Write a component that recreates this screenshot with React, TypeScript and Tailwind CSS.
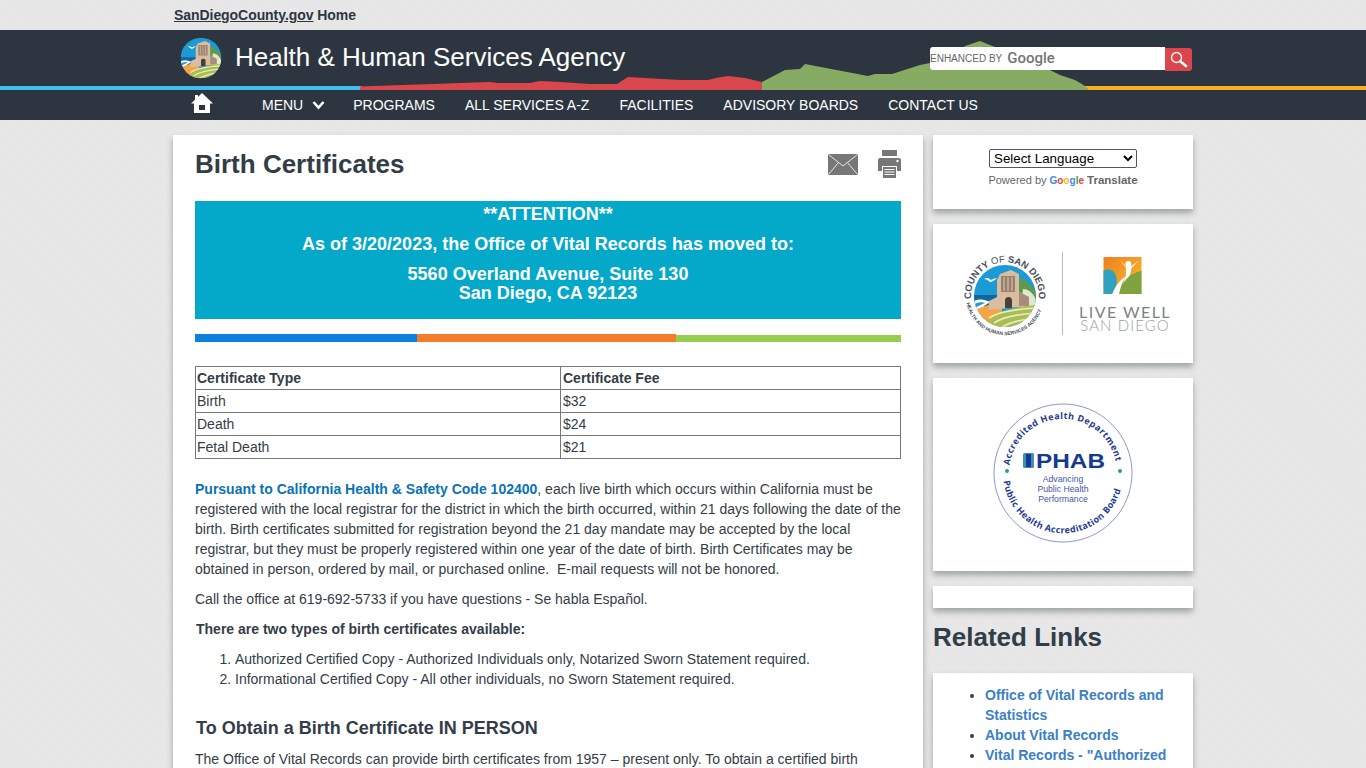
import React from "react";

function Scene({ id }: { id: string }) {
  return (
    <g>
      <defs>
        <clipPath id={id}>
          <circle cx="0" cy="0" r="31" />
        </clipPath>
      </defs>
      <g clipPath={`url(#${id})`}>
        <rect x="-31" y="-31" width="62" height="62" fill="#1c9ad6" />
        <path d="M-31 -1H-6V12H-31Z" fill="#12659f" />
        <path d="M-31 5C-24 2 -20 4 -15 6C-18 9 -23 9 -21 13L-31 16Z" fill="#ffffff" />
        <path d="M-31 8C-26 6 -22 6 -20 7C-24 9 -27 10 -31 12Z" fill="#1c9ad6" />
        <path d="M-31 14L-17 9L-3 10L-3 31H-31Z" fill="#f2a544" />
        <path d="M12 -18C20 -18 28 -10 31 -2V12H10Z" fill="#5f9a4a" />
        <path d="M18 -7C24 -7 28 -3 31 4V12H16Z" fill="#e3e8cc" />
        <path d="M-16 14V5L-8 1V-16L-5 -22L6 -26L14 -22V-4L24 1V10Z" fill="#d8bda2" />
        <path d="M-4 -20H10V-4H-4Z" fill="#96806f" />
        <path d="M-1 -19V-5M3 -19V-5M7 -19V-5" stroke="#d8bda2" strokeWidth="1.2" />
        <path d="M0 12V4C0 0 7 0 7 4V12Z" fill="#4e3e35" />
        <path d="M14 -4L24 1V10H14Z" fill="#a88d7b" />
        <path d="M-18 31C-18 18 6 11 31 9V31Z" fill="#a9bd54" />
        <path d="M-16 22C-6 15 12 13 31 12M-11 27C0 20 14 18 31 17M-3 31C8 25 20 23 31 23" stroke="#e9edb9" strokeWidth="1.7" fill="none" />
        <path d="M-21 -17C-18 -19 -16 -18 -14 -16C-12 -17 -10 -18 -8 -18C-10 -16 -13 -14 -15 -14C-17 -16 -19 -17 -21 -17Z" fill="#ffffff" />
      </g>
    </g>
  );
}

function Mountains() {
  return (
    <svg className="absolute left-0 top-0" width="1366" height="60" viewBox="0 30 1366 60">
      <path d="M360 90V86.5L490 82L498 83L530 83L540 81L560 82L590 84L617 84L628 77L680 80L708 80L716 78L728 76L745 78L762 82L783 90Z" fill="#d9474c" />
      <path d="M762 90V82L785 70L800 69L805 64L868 76L875 74L892 74L920 65L945 60L965 46L980 41L1000 49L1025 60L1050 70L1060 75L1075 80L1085 86L1089 90Z" fill="#87ab62" />
    </svg>
  );
}

function CountyLogo() {
  return (
    <svg width="90" height="90" viewBox="-45 -45 90 90" className="shrink-0">
      <Scene id="countyClip" />
      <defs>
        <path id="countyTop" d="M-33.9 3A34 34 0 1 1 33.9 3" />
        <path id="countyBottom" d="M-38.7 5A39 39 0 0 0 38.7 5" />
      </defs>
      <text fontSize="9.5" fontWeight="700" fill="#4a4f5a" style={{ fontFamily: '"Liberation Sans", sans-serif' }}>
        <textPath href="#countyTop" startOffset="0">
          COUNTY <tspan fontWeight="400">OF</tspan> SAN DIEGO
        </textPath>
      </text>
      <text fontSize="5" fontWeight="700" fill="#4a4f5a" style={{ fontFamily: '"Liberation Sans", sans-serif' }}>
        <textPath href="#countyBottom" startOffset="2">
          HEALTH AND HUMAN SERVICES AGENCY
        </textPath>
      </text>
    </svg>
  );
}

function LiveWellIcon() {
  return (
    <svg width="39" height="37" viewBox="0 0 39 38" className="block">
      <defs>
        <linearGradient id="lwSky" x1="0" y1="0" x2="1" y2="1">
          <stop offset="0" stopColor="#ee7d22" />
          <stop offset="1" stopColor="#f9c22c" />
        </linearGradient>
      </defs>
      <rect width="39" height="38" fill="url(#lwSky)" />
      <path d="M0 14C6 11 12 14 13 20C15 26 13 30 9 38H0Z" fill="#2fa3bd" />
      <path d="M9 38C14 27 24 18 39 14V38Z" fill="#7fa33f" />
      <path d="M9 38C13 28 18 23 23 20C19 26 17 32 16 38Z" fill="#ffffff" />
      <circle cx="25.5" cy="7" r="3" fill="#ffffff" />
      <path d="M17 3L23 11L23 19L20 27L24 22L27 19L29 11L36 4L28 9.5H23Z" fill="#ffffff" />
    </svg>
  );
}

function PhabBadge() {
  const ff = { fontFamily: '"Open Sans", "Liberation Sans", sans-serif' };
  return (
    <svg width="140" height="140" viewBox="-70 -70 140 140">
      <circle cx="0" cy="0" r="69" fill="none" stroke="#5a6fa8" strokeWidth="0.7" />
      <defs>
        <path id="phabTop" d="M-53.5 -7.5A54 54 0 0 1 53.5 -7.5" />
        <path id="phabBottom" d="M-59.5 8A60 60 0 0 0 59.5 8" />
      </defs>
      <text fontSize="9" fontWeight="700" fill="#1f3a93" letterSpacing="0.45" style={ff}>
        <textPath href="#phabTop" startOffset="0">Accredited Health Department</textPath>
      </text>
      <text fontSize="9" fontWeight="700" fill="#1f3a93" letterSpacing="0.35" style={ff}>
        <textPath href="#phabBottom" startOffset="0">Public Health Accreditation Board</textPath>
      </text>
      <circle cx="-56" cy="-2" r="2" fill="#2d9c8a" />
      <circle cx="57" cy="-2" r="2" fill="#2d9c8a" />
      <rect x="-40" y="-20" width="11" height="15" rx="1.5" fill="#3d8fb8" />
      <rect x="-37" y="-19" width="5" height="13" fill="#153a90" />
      <text x="-27" y="-5" fontSize="21" fontWeight="700" fill="#153a90" textLength="69" lengthAdjust="spacingAndGlyphs" style={{ fontFamily: '"Liberation Sans", sans-serif' }}>PHAB</text>
      <g fontSize="8.7" fill="#4257a8" textAnchor="middle" style={{ fontFamily: '"Liberation Sans", sans-serif' }}>
        <text x="0" y="9">Advancing</text>
        <text x="0" y="19">Public Health</text>
        <text x="0" y="29">Performance</text>
      </g>
    </svg>
  );
}

const navItems = ["PROGRAMS", "ALL SERVICES A-Z", "FACILITIES", "ADVISORY BOARDS", "CONTACT US"];
const cardClass = "bg-white shadow-[0_4px_6px_rgba(70,85,85,0.45)]";

export default function App() {
  return (
    <div className="h-[768px] overflow-hidden bg-[repeating-linear-gradient(45deg,#e5e5e5_0px,#e5e5e5_1px,#e8e8e8_1px,#e8e8e8_2px)] text-[14px] leading-5 text-[#333d47] font-['Liberation_Sans',Arial,sans-serif]">
      <div className="mx-auto h-[30px] w-[1020px] pl-px pt-[5px] font-bold tracking-[-0.06px] text-[#2d3640]">
        <a className="underline">SanDiegoCounty.gov</a> Home
      </div>

      <div className="relative h-[60px] bg-[#2d3640]">
        <div className="absolute bottom-0 left-0 h-1 w-[362px] bg-[#3fbdec]" />
        <div className="absolute bottom-0 right-0 h-1 w-[285px] bg-[#f8b022]" />
        <Mountains />
        <div className="relative mx-auto flex h-full w-[1020px] items-start">
          <svg width="42" height="42" viewBox="-32 -32 64 64" className="ml-[7px] mt-[7px] shrink-0">
            <Scene id="headClip" />
          </svg>
          <div className="ml-[13px] mt-[10px] text-[26px] leading-[34px] text-white">Health &amp; Human Services Agency</div>
          <div className="ml-auto mr-px mt-[17px] flex items-start">
            <div className="flex h-[23px] w-[235px] items-center rounded-l-[3px] bg-white text-[#666]">
              <span className="text-[10px] leading-none">ENHANCED BY</span>
              <span className="ml-[5px] font-['Roboto',sans-serif] text-[15px] font-medium leading-none text-[#757575]">Google</span>
            </div>
            <div className="mt-px flex h-[23px] w-[27px] items-center justify-center rounded-r-[3px] bg-[#d9474c]">
              <svg width="19" height="19" viewBox="0 0 19 19" fill="none" stroke="#ffffff">
                <circle cx="7.5" cy="7.5" r="5" strokeWidth="1.3" />
                <path d="M11.5 11.5L17 16" strokeWidth="2.6" strokeLinecap="round" />
              </svg>
            </div>
          </div>
        </div>
      </div>

      <div className="h-[30px] bg-[#2d3640]">
        <div className="mx-auto flex h-full w-[1020px] items-center text-white">
          <svg width="22" height="21" viewBox="0 0 22 21" className="ml-[18px] mb-[3px] shrink-0" fill="#ffffff">
            <path d="M11 0L22 10.5H19V20H3V10.5H0L4 6.7V2H7V3.9ZM8 12V17H14V12Z" fillRule="evenodd" />
          </svg>
          <div className="ml-[49px] flex items-center gap-[9px]">
            <span>MENU</span>
            <svg width="13" height="10" viewBox="0 0 13 10" fill="none" stroke="#ffffff" strokeWidth="2.6">
              <path d="M1.5 2L6.5 7.5L11.5 2" />
            </svg>
          </div>
          <div className="ml-[28px] flex gap-[30px]">
            {navItems.map((n) => (
              <span key={n}>{n}</span>
            ))}
          </div>
        </div>
      </div>

      <div className="mx-auto mt-[15px] flex w-[1020px] items-start gap-[10px]">
        <main className={`h-[640px] w-[750px] shrink-0 px-[22px] ${cardClass}`}>
          <div className="flex h-[66px] items-start justify-between">
            <h1 className="mt-[12px] text-[26px] font-bold leading-[34px]">Birth Certificates</h1>
            <div className="flex items-start gap-5 pt-[15px]">
              <svg width="30" height="22" viewBox="0 0 30 22" className="mt-1">
                <rect width="30" height="21" fill="#777" />
                <path d="M0.5 0.5L15 12L29.5 0.5M0.5 20.5L10.5 8.5M29.5 20.5L19.5 8.5" fill="none" stroke="#e8e8e8" strokeWidth="1" />
              </svg>
              <svg width="23" height="28" viewBox="0 0 23 28">
                <rect x="4" y="0" width="15" height="6" fill="#777" />
                <path d="M2 8H21Q23 8 23 10V21H19V16H4V21H0V10Q0 8 2 8Z" fill="#777" />
                <circle cx="19.5" cy="11" r="1.2" fill="#fff" />
                <path d="M5 17H18V28H5Z" fill="#777" />
                <path d="M6.5 19.5H16.5M6.5 22H16.5M6.5 24.5H16.5" stroke="#fff" strokeWidth="1.2" />
              </svg>
            </div>
          </div>

          <div className="h-[118px] bg-[#04a8c8] pt-[4px] text-center text-[18px] font-bold leading-[19px] text-white">
            <p>**ATTENTION**</p>
            <p className="mt-[11px]">As of 3/20/2023, the Office of Vital Records has moved to:</p>
            <p className="mt-[11px]">
              5560 Overland Avenue, Suite 130
              <br />
              San Diego, CA 92123
            </p>
          </div>

          <div className="mt-[15px] flex h-2 items-end">
            <div className="h-2 w-[222px] bg-[#0d7fdd]" />
            <div className="h-2 w-[259px] bg-[#f47d2b]" />
            <div className="h-[7px] flex-1 bg-[#96cc4f]" />
          </div>

          <table className="mt-6 w-full table-fixed border-collapse border border-[#777] leading-[22px]">
            <colgroup>
              <col className="w-[365px]" />
              <col />
            </colgroup>
            <tbody>
              <tr className="font-bold">
                <td className="border border-[#777] px-px">Certificate Type</td>
                <td className="border border-[#777] pl-[2px]">Certificate Fee</td>
              </tr>
              {[
                ["Birth", "$32"],
                ["Death", "$24"],
                ["Fetal Death", "$21"],
              ].map(([a, b]) => (
                <tr key={a}>
                  <td className="border border-[#777] px-px">{a}</td>
                  <td className="border border-[#777] pl-[2px]">{b}</td>
                </tr>
              ))}
            </tbody>
          </table>

          <p className="mt-5">
            <a className="font-bold text-[#0b72b5]">Pursuant to California Health &amp; Safety Code 102400</a>, each live birth which occurs within California must be registered with the local registrar for the district in which the birth occurred, within 21 days following the date of the birth. Birth certificates submitted for registration beyond the 21 day mandate may be accepted by the local registrar, but they must be properly registered within one year of the date of birth. Birth Certificates may be obtained in person, ordered by mail, or purchased online.&nbsp; E-mail requests will not be honored.
          </p>
          <p className="mt-[10px]">Call the office at 619-692-5733 if you have questions - Se habla Español.</p>
          <p className="mt-[10px] pl-px font-bold">There are two types of birth certificates available:</p>
          <ol className="mt-[10px] list-decimal pl-10">
            <li>Authorized Certified Copy - Authorized Individuals only, Notarized Sworn Statement required.</li>
            <li>Informational Certified Copy - All other individuals, no Sworn Statement required.</li>
          </ol>
          <h2 className="mt-[28px] pl-px text-[18px] font-bold leading-[22px]">To Obtain a Birth Certificate IN PERSON</h2>
          <p className="mt-[10px]">The Office of Vital Records can provide birth certificates from 1957 – present only. To obtain a certified birth</p>
        </main>

        <aside className="w-[260px] shrink-0">
          <div className={`h-[74px] pt-[14px] text-center ${cardClass}`}>
            <select className="mx-auto block h-[19px] w-[148px] rounded-[2px] border border-[#555] bg-white text-[13.33px] leading-none text-black">
              <option>Select Language</option>
            </select>
            <div className="mt-[2px] text-[11px] leading-5 text-[#666]">
              Powered by{" "}
              <span className="text-[10px] font-bold">
                <span className="text-[#4285f4]">G</span>
                <span className="text-[#ea4335]">o</span>
                <span className="text-[#fbbc05]">o</span>
                <span className="text-[#4285f4]">g</span>
                <span className="text-[#34a853]">l</span>
                <span className="text-[#ea4335]">e</span>
              </span>{" "}
              <span className="text-[11.5px] font-bold">Translate</span>
            </div>
          </div>

          <div className={`mt-[15px] flex h-[139px] items-center ${cardClass}`}>
            <div className="ml-[27px] mt-1">
              <CountyLogo />
            </div>
            <div className="ml-[12px] h-[83px] w-px bg-[#b9b9b9]" />
            <div className="ml-[18px] flex w-[88px] flex-col items-center whitespace-nowrap pt-[2px] font-['Lato',sans-serif]">
              <div className="mr-[5px]">
                <LiveWellIcon />
              </div>
              <div className="mt-[10px] text-[16px] leading-[15px] tracking-[1.45px] text-[#7d8286]">LIVE WELL</div>
              <div className="text-[15px] font-light leading-[13px] tracking-[1.1px] text-[#9a9ea1]">SAN DIEGO</div>
            </div>
          </div>

          <div className={`mt-[15px] flex h-[193px] items-start justify-center pt-[25px] ${cardClass}`}>
            <PhabBadge />
          </div>

          <div className={`mt-[15px] h-[22px] ${cardClass}`} />

          <h2 className="mt-[12px] text-[26px] font-bold leading-[34px]">Related Links</h2>

          <div className={`mt-[19px] h-[200px] pl-[52px] pr-[20px] pt-[12px] ${cardClass}`}>
            <ul className="list-disc font-bold text-[#333d47]">
              <li className="text-[#3a80c3] marker:text-[#333d47]">Office of Vital Records and Statistics</li>
              <li className="text-[#3a80c3] marker:text-[#333d47]">About Vital Records</li>
              <li className="text-[#3a80c3] marker:text-[#333d47]">Vital Records - "Authorized</li>
            </ul>
          </div>
        </aside>
      </div>
    </div>
  );
}
